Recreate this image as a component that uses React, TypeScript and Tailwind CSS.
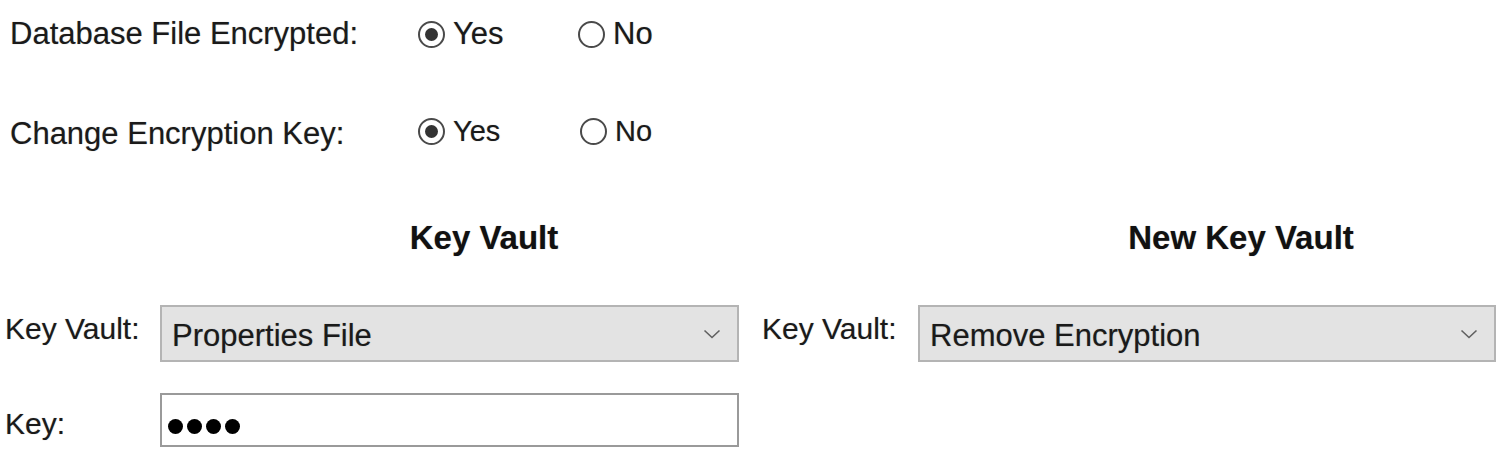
import React from 'react';

function Radio({ checked, label }: { checked?: boolean; label: string }) {
  return (
    <div className="flex items-center">
      <div className="w-[27px] h-[27px] rounded-full border-[2.5px] border-[#4a4a4a] flex items-center justify-center bg-white">
        {checked && <div className="w-[13px] h-[13px] rounded-full bg-[#333]" />}
      </div>
      <span className="ml-[8px]">{label}</span>
    </div>
  );
}

function Chevron() {
  return (
    <svg width="18" height="10" viewBox="0 0 18 10" className="shrink-0">
      <polyline points="1.5,1.5 9,8.5 16.5,1.5" fill="none" stroke="#606060" strokeWidth="1.6" />
    </svg>
  );
}

function Select({ value, width }: { value: string; width: string }) {
  return (
    <div className={`${width} h-[57px] bg-[#e3e3e3] border-2 border-[#b4b4b4] flex items-center justify-between pl-[10px] pr-[16px]`}>
      <span className="pt-[4px]">{value}</span>
      <Chevron />
    </div>
  );
}

export default function App() {
  return (
    <div
      className="w-[1504px] h-[459px] bg-white text-[#1a1a1a] text-[31px] leading-[36px] overflow-hidden [text-shadow:0_0_1px_rgba(0,0,0,0.35)]"
      style={{ fontFamily: '"Liberation Sans", Arial, sans-serif' }}
    >
      {/* Encrypted */}
      <div className="h-[68px] flex items-center pl-[10px]">
        <div className="w-[408px]">Database File Encrypted:</div>
        <div className="w-[160px]">
          <Radio checked label="Yes" />
        </div>
        <Radio label="No" />
      </div>

      {/* Change key */}
      <div className="mt-[29px] h-[68px] flex items-center pl-[10px]">
        <div className="w-[408px] pt-[6px]">Change Encryption Key:</div>
        <div className="w-[162px] text-[29px]">
          <Radio checked label="Yes" />
        </div>
        <div className="text-[29px]">
          <Radio label="No" />
        </div>
      </div>

      {/* Headings */}
      <div className="mt-[53px] h-[40px] grid grid-cols-[968px_546px] items-center font-bold text-[33px] text-[#111]">
        <div className="text-center">Key Vault</div>
        <div className="text-center">New Key Vault</div>
      </div>

      {/* Vault selects */}
      <div className="mt-[47px] flex items-start pl-[5px]">
        <div className="w-[155px] pt-[6px] text-[30px]">Key Vault:</div>
        <Select value="Properties File" width="w-[579px]" />
        <div className="w-[156px] ml-[23px] pt-[6px] text-[30px]">Key Vault:</div>
        <Select value="Remove Encryption" width="w-[578px]" />
      </div>

      {/* Key */}
      <div className="mt-[31px] flex items-center pl-[5px]">
        <div className="w-[155px] pt-[7px] text-[30px]">Key:</div>
        <div className="w-[579px] h-[54px] bg-white border-2 border-[#9a9a9a] flex items-center pl-[6px] pt-[12px] gap-[4px]">
          <span className="w-[15px] h-[15px] rounded-full bg-black" />
          <span className="w-[15px] h-[15px] rounded-full bg-black" />
          <span className="w-[15px] h-[15px] rounded-full bg-black" />
          <span className="w-[15px] h-[15px] rounded-full bg-black" />
        </div>
      </div>
    </div>
  );
}
